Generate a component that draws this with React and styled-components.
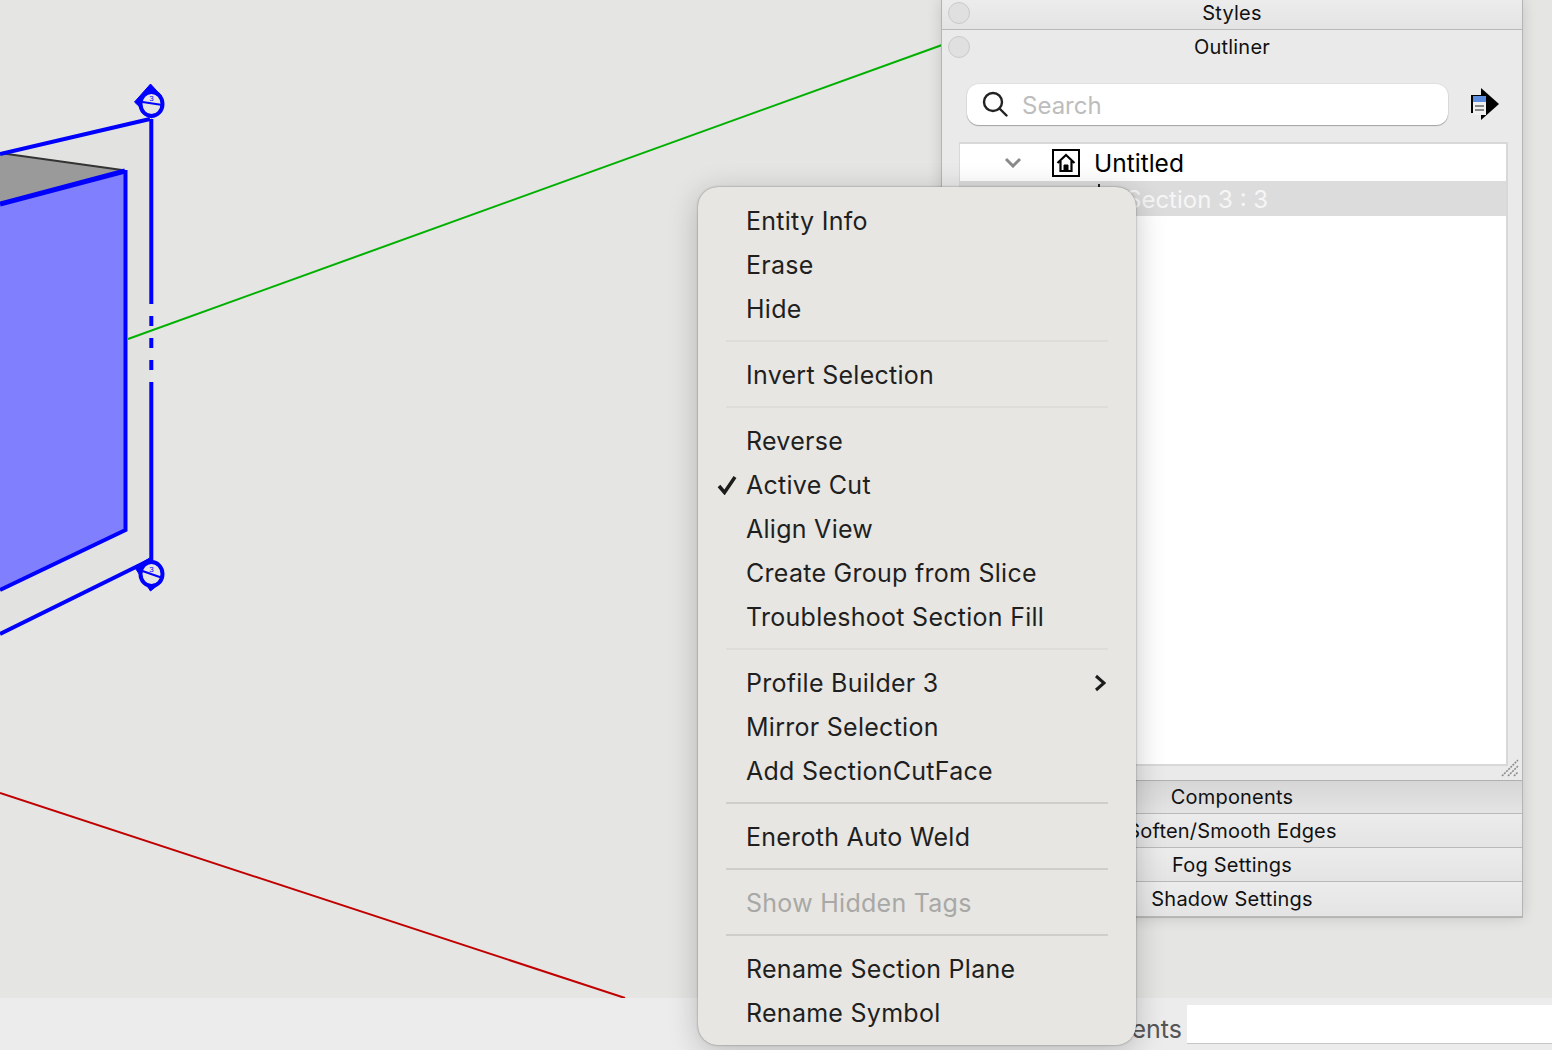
import React from 'react'
import styled, { createGlobalStyle } from 'styled-components'

const GlobalStyle = createGlobalStyle`
  html, body { margin: 0; padding: 0; background: #e5e5e3; }
  body { font-family: Inter, "Liberation Sans", sans-serif; overflow: hidden; }
`

const menuGroups = [
  [{ label: 'Entity Info' }, { label: 'Erase' }, { label: 'Hide' }],
  [{ label: 'Invert Selection' }],
  [
    { label: 'Reverse' },
    { label: 'Active Cut', checked: true },
    { label: 'Align View' },
    { label: 'Create Group from Slice' },
    { label: 'Troubleshoot Section Fill' },
  ],
  [
    { label: 'Profile Builder 3', submenu: true },
    { label: 'Mirror Selection' },
    { label: 'Add SectionCutFace' },
  ],
  [{ label: 'Eneroth Auto Weld' }],
  [{ label: 'Show Hidden Tags', disabled: true }],
  [{ label: 'Rename Section Plane' }, { label: 'Rename Symbol' }],
]

const App = () => (
  <Page>
    <GlobalStyle />
    <Canvas>
      <Scene />
      <Tray>
        <TitleBar $height={30} $pad={4}>
          <Dot />
          Styles
        </TitleBar>
        <OutlinerTitle>
          <Dot $top={6} />
          Outliner
        </OutlinerTitle>
        <OutlinerBody>
          <SearchRow>
            <SearchBox>
              <SearchIcon />
              <SearchHint>Search</SearchHint>
            </SearchBox>
            <DetailsIcon />
          </SearchRow>
          <Tree>
            <RootRow>
              <ChevronDown />
              <HouseIcon />
              <RootName>Untitled</RootName>
            </RootRow>
            <SelectedRow>
              <TreeTick />
              Section 3 : 3
            </SelectedRow>
          </Tree>
          <Grip />
        </OutlinerBody>
        <TitleBar $height={33} $top="#d6d6d6">Components</TitleBar>
        <TitleBar $height={34}>Soften/Smooth Edges</TitleBar>
        <TitleBar $height={34}>Fog Settings</TitleBar>
        <TitleBar $height={35}>Shadow Settings</TitleBar>
      </Tray>
    </Canvas>
    <StatusBar>
      <StatusLabel>Measurements</StatusLabel>
      <StatusInput />
    </StatusBar>
    <Menu>
      {menuGroups.map((group, i) => (
        <React.Fragment key={i}>
          {i > 0 && <Separator $strong={i >= 4} />}
          {group.map(item => (
            <MenuItem key={item.label} $disabled={item.disabled}>
              {item.checked && <CheckIcon />}
              {item.label}
              {item.submenu && <SubmenuIcon />}
            </MenuItem>
          ))}
        </React.Fragment>
      ))}
    </Menu>
  </Page>
)

function SectionMarker({ transform, points, lineY1, lineY2, numberY }) {
  return (
    <g transform={transform}>
      <polygon points={points} fill="#0000ff" stroke="#0000ff" strokeWidth="1" strokeLinejoin="round" />
      <ellipse cx="0" cy="0" rx="11" ry="12" fill="#e5e5e3" stroke="#0000ff" strokeWidth="4" />
      <line x1="-9" y1={lineY1} x2="11" y2={lineY2} stroke="#0000ff" strokeWidth="2" />
      <text x="0" y={numberY} fontSize="8" fontFamily="Liberation Sans" fill="#0000ff" textAnchor="middle">3</text>
    </g>
  )
}

function Scene() {
  return (
    <SceneSvg viewBox="0 0 1552 998">
      <polygon points="0,154 150,119 151,560 0,634" fill="#e2e2e0" />
      <line x1="128" y1="339" x2="942" y2="45" stroke="#00b000" strokeWidth="2" />
      <line x1="0" y1="793" x2="625" y2="998" stroke="#c00000" strokeWidth="2" />
      <polygon points="0,153 122,170 0,205" fill="#9a9a9a" />
      <line x1="0" y1="153" x2="122" y2="170" stroke="#333" strokeWidth="2" />
      <polygon points="0,205 125,172 125,530 0,588" fill="#8080ff" />
      <path d="M0 204 L125 171" fill="none" stroke="#0000ff" strokeWidth="5" />
      <path d="M125.500 170 L125.500 530 L0 590" fill="none" stroke="#0000ff" strokeWidth="4" />
      <path d="M0 154 L150 119" fill="none" stroke="#0000ff" strokeWidth="4" />
      <path d="M0 634 L150 560" fill="none" stroke="#0000ff" strokeWidth="4" />
      <path d="M151.300 119 V304 M151.300 316 V326 M151.300 338 V348 M151.300 360 V370 M151.300 382 V560" fill="none" stroke="#0000ff" strokeWidth="4" />
      <SectionMarker transform="translate(151.500 104)" points="-17,-2 -1,-20 10,-8 0,14" lineY1="-2" lineY2="1" numberY="-3" />
      <SectionMarker transform="translate(151.500 574)" points="-17,-7 -1,17 10,8 0,-17" lineY1="-3" lineY2="4" numberY="-2" />
    </SceneSvg>
  )
}

function SearchIcon() {
  return (
    <svg width="26" height="26" viewBox="0 0 26 26" fill="none" stroke="#222" strokeWidth="2.400">
      <circle cx="11" cy="11" r="9" />
      <line x1="17.500" y1="17.500" x2="24.500" y2="24.500" strokeLinecap="round" />
    </svg>
  )
}

function DetailsIcon() {
  return (
    <DetailsSvg width="28" height="32" viewBox="0 0 28 32">
      <polygon points="0,7 10,7 10,0 28,16 10,32 10,25 0,25" fill="#000" />
      <rect x="2" y="8" width="13" height="19" fill="#f0f0f0" />
      <rect x="2" y="8" width="13" height="6" fill="#5b8ee0" />
      <rect x="4" y="17" width="9" height="2" fill="#888" />
      <rect x="4" y="21" width="9" height="2" fill="#888" />
    </DetailsSvg>
  )
}

function ChevronDown() {
  return (
    <ChevronSvg width="18" height="11" viewBox="0 0 18 11" fill="none" stroke="#8a8a8a" strokeWidth="3">
      <path d="M2 2 L9 9 L16 2" />
    </ChevronSvg>
  )
}

function HouseIcon() {
  return (
    <HouseBox>
      <svg width="20" height="20" viewBox="0 0 20 20" fill="none" stroke="#000" strokeWidth="2.200">
        <path d="M1.500 10 L10 2 L18.500 10 M4.500 8 V18 H15.500 V8" />
        <path d="M8 18 V12 H12 V18 Z" fill="#000" strokeWidth="1" />
      </svg>
    </HouseBox>
  )
}

function CheckIcon() {
  return (
    <CheckSvg width="20" height="20" viewBox="0 0 20 20" fill="none" stroke="#1c1c1c" strokeWidth="3.500">
      <path d="M2 11 L7.500 17.500 L18 2" />
    </CheckSvg>
  )
}

function SubmenuIcon() {
  return (
    <SubmenuSvg width="12" height="18" viewBox="0 0 12 18" fill="none" stroke="#1c1c1c" strokeWidth="3">
      <path d="M2 2 L10 9 L2 16" />
    </SubmenuSvg>
  )
}

function Grip() {
  return (
    <GripSvg width="18" height="18" viewBox="0 0 18 18" stroke="#8c8c8c" strokeWidth="1.600" strokeDasharray="2 1">
      <line x1="1" y1="17" x2="17" y2="1" />
      <line x1="7" y1="17" x2="17" y2="7" />
      <line x1="13" y1="17" x2="17" y2="13" />
    </GripSvg>
  )
}

const Page = styled.div`
  position: relative;
  width: 1552px;
  height: 1050px;
  overflow: hidden;
  display: grid;
  grid-template-rows: 998px 52px;
`

const Canvas = styled.div`
  position: relative;
  background: #e5e5e3;
`

const SceneSvg = styled.svg`
  display: block;
  width: 1552px;
  height: 998px;
`

const Tray = styled.div`
  position: absolute;
  left: 942px;
  top: 0;
  width: 580px;
  display: flex;
  flex-direction: column;
  box-shadow: 0 0 14px rgba(0, 0, 0, 0.16);
  outline: 1px solid #b4b4b4;
  font-size: 20px;
  letter-spacing: 0.2px;
  color: #111;
`

const TitleBar = styled.div`
  position: relative;
  height: ${({ $height }) => $height}px;
  box-sizing: border-box;
  padding-bottom: ${({ $pad }) => $pad || 0}px;
  display: flex;
  align-items: center;
  justify-content: center;
  background: linear-gradient(${({ $top }) => $top || '#ececec'}, #e4e4e4);
  border-bottom: 1px solid #b9b9b9;
`

const OutlinerTitle = styled.div`
  position: relative;
  height: 34px;
  display: flex;
  align-items: center;
  justify-content: center;
  background: #eaeaea;
`

const Dot = styled.span`
  position: absolute;
  left: 6px;
  top: ${({ $top }) => $top || 2}px;
  width: 22px;
  height: 22px;
  box-sizing: border-box;
  border-radius: 50%;
  background: #e0e0e0;
  border: 1px solid #cacaca;
`

const OutlinerBody = styled.div`
  position: relative;
  height: 717px;
  box-sizing: border-box;
  padding: 19px 15px 0 17px;
  background: #eaeaea;
  border-bottom: 1px solid #b0b0b0;
`

const SearchRow = styled.div`
  display: flex;
  align-items: center;
  padding-left: 8px;
`

const SearchBox = styled.div`
  width: 481px;
  height: 41px;
  margin-top: 1px;
  box-sizing: border-box;
  display: flex;
  align-items: center;
  gap: 14px;
  padding-left: 15px;
  background: #fff;
  border-radius: 12px;
  box-shadow: 0 1px 1px rgba(0, 0, 0, 0.28), 0 0 0 1px rgba(0, 0, 0, 0.04);
  > svg { margin-top: -1px; }
`

const SearchHint = styled.span`
  font-size: 24px;
  letter-spacing: 0;
  padding-top: 2px;
  color: #bdbdbd;
`

const DetailsSvg = styled.svg`
  margin-left: 23px;
  margin-top: 0;
`

const Tree = styled.div`
  margin-top: 17px;
  width: 549px;
  height: 624px;
  box-sizing: border-box;
  background: #fff;
  border: 2px solid #d8d8d8;
  border-left-width: 1px;
`

const RootRow = styled.div`
  height: 37px;
  display: flex;
  align-items: center;
  padding-left: 44px;
`

const ChevronSvg = styled.svg`
  margin-right: 30px;
`

const HouseBox = styled.span`
  width: 28px;
  height: 28px;
  box-sizing: border-box;
  display: flex;
  align-items: center;
  justify-content: center;
  border: 2.500px solid #000;
  margin-right: 14px;
`

const RootName = styled.span`
  font-size: 24.500px;
  letter-spacing: 0;
  color: #000;
`

const SelectedRow = styled.div`
  position: relative;
  height: 35px;
  display: flex;
  align-items: center;
  padding-top: 2px;
  box-sizing: border-box;
  padding-left: 166px;
  background: #dcdcdc;
  color: #f6f6f6;
  font-size: 24px;
  letter-spacing: 0;
`

const TreeTick = styled.span`
  position: absolute;
  left: 138px;
  top: 3px;
  width: 2px;
  height: 6px;
  background: #222;
`

const GripSvg = styled.svg`
  position: absolute;
  right: 3px;
  bottom: 3px;
`

const StatusBar = styled.div`
  display: flex;
  justify-content: flex-end;
  align-items: center;
  gap: 5px;
  padding-top: 1px;
  background: #ececec;
`

const StatusLabel = styled.span`
  font-size: 25px;
  margin-top: 8px;
  color: #555;
`

const StatusInput = styled.div`
  width: 365px;
  height: 38px;
  background: #fff;
  border-bottom: 1px solid #c6c6c6;
`

const Menu = styled.div`
  position: absolute;
  left: 698px;
  top: 187px;
  width: 438px;
  height: 858px;
  box-sizing: border-box;
  padding: 12px 0 10px;
  background: #e7e6e2;
  border-radius: 20px;
  box-shadow: 0 0 2px rgba(0, 0, 0, 0.45), 0 6px 30px rgba(0, 0, 0, 0.22);
`

const MenuItem = styled.div`
  position: relative;
  height: 44px;
  display: flex;
  align-items: center;
  padding-left: 48px;
  font-size: 25px;
  letter-spacing: 0.27px;
  color: ${({ $disabled }) => ($disabled ? '#a8a8a6' : '#1f1f1f')};
`

const Separator = styled.div`
  height: 2px;
  margin: 9px 28px 11px;
  background: ${({ $strong }) => ($strong ? '#cfcecb' : '#dedDd9')};
`

const CheckSvg = styled.svg`
  position: absolute;
  left: 19px;
  top: 12px;
`

const SubmenuSvg = styled.svg`
  position: absolute;
  right: 30px;
  top: 13px;
`

export default App
